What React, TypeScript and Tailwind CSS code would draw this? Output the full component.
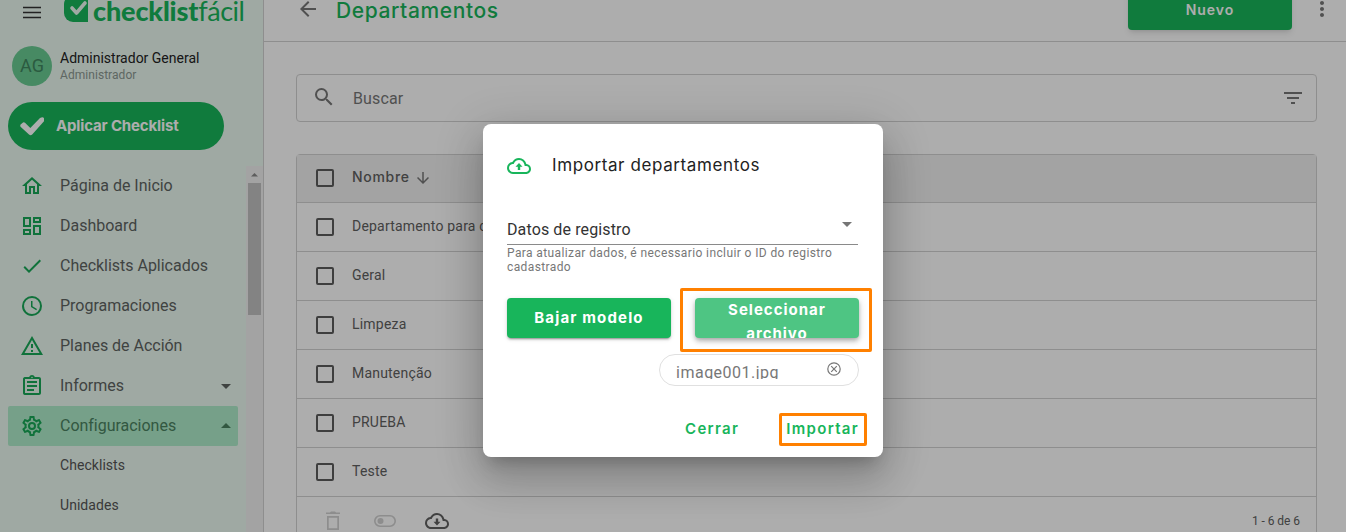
import type { ReactNode } from "react";
import {
  MdArrowBack,
  MdArrowDownward,
  MdArrowDropDown,
  MdArrowDropUp,
  MdFilterList,
  MdMoreVert,
  MdOutlineAssignment,
  MdSearch,
} from "react-icons/md";

const paths = {
  home: "M12 5.69L17 10.19V18H15V12H9V18H7V10.19L12 5.69M12 3L2 12H5V20H11V14H13V20H19V12H22L12 3Z",
  dashboard:
    "M19,5V7H15V5H19M9,5V11H5V5H9M19,13V19H15V13H19M9,17V19H5V17H9M21,3H13V9H21V3M11,3H3V13H11V3M21,11H13V21H21V11M11,15H3V21H11V15Z",
  check: "M21,7L9,19L3.5,13.5L4.91,12.09L9,16.17L19.59,5.59L21,7Z",
  clock:
    "M12,20A8,8 0 0,0 20,12A8,8 0 0,0 12,4A8,8 0 0,0 4,12A8,8 0 0,0 12,20M12,2A10,10 0 0,1 22,12A10,10 0 0,1 12,22C6.47,22 2,17.5 2,12A10,10 0 0,1 12,2M12.5,7V12.25L17,14.92L16.25,16.15L11,13V7H12.5Z",
  alert: "M12,2L1,21H23M12,6L19.53,19H4.47M11,10V14H13V10M11,16V18H13V16",
  cog: "M12,8A4,4 0 0,1 16,12A4,4 0 0,1 12,16A4,4 0 0,1 8,12A4,4 0 0,1 12,8M12,10A2,2 0 0,0 10,12A2,2 0 0,0 12,14A2,2 0 0,0 14,12A2,2 0 0,0 12,10M10,22C9.75,22 9.54,21.82 9.5,21.58L9.13,18.93C8.5,18.68 7.96,18.34 7.44,17.94L4.95,18.95C4.73,19.03 4.46,18.95 4.34,18.73L2.34,15.27C2.21,15.05 2.27,14.78 2.46,14.63L4.57,12.97L4.5,12L4.57,11L2.46,9.37C2.27,9.22 2.21,8.95 2.34,8.73L4.34,5.27C4.46,5.05 4.73,4.96 4.95,5.05L7.44,6.05C7.96,5.66 8.5,5.32 9.13,5.07L9.5,2.42C9.54,2.18 9.75,2 10,2H14C14.25,2 14.46,2.18 14.5,2.42L14.87,5.07C15.5,5.32 16.04,5.66 16.56,6.05L19.05,5.05C19.27,4.96 19.54,5.05 19.66,5.27L21.66,8.73C21.79,8.95 21.73,9.22 21.54,9.37L19.43,11L19.5,12L19.43,13L21.54,14.63C21.73,14.78 21.79,15.05 21.66,15.27L19.66,18.73C19.54,18.95 19.27,19.04 19.05,18.95L16.56,17.95C16.04,18.34 15.5,18.68 14.87,18.93L14.5,21.58C14.46,21.82 14.25,22 14,22H10M11.25,4L10.88,6.61C9.68,6.86 8.62,7.5 7.85,8.39L5.44,7.35L4.69,8.65L6.8,10.2C6.4,11.37 6.4,12.64 6.8,13.8L4.68,15.36L5.43,16.66L7.86,15.62C8.63,16.5 9.68,17.14 10.87,17.38L11.24,20H12.76L13.13,17.39C14.32,17.14 15.37,16.5 16.14,15.62L18.57,16.66L19.32,15.36L17.2,13.81C17.6,12.64 17.6,11.37 17.2,10.2L19.31,8.65L18.56,7.35L16.15,8.39C15.38,7.5 14.32,6.86 13.12,6.62L12.75,4H11.25Z",
  cloud:
    "M19.35 10.04A7.49 7.49 0 0 0 12 4C9.11 4 6.6 5.64 5.35 8.04A5.994 5.994 0 0 0 0 14c0 3.31 2.69 6 6 6h13c2.76 0 5-2.24 5-5 0-2.64-2.05-4.78-4.65-4.96zM19 18H6c-2.21 0-4-1.79-4-4 0-2.05 1.53-3.76 3.56-3.97l1.07-.11.5-.95A5.469 5.469 0 0 1 12 6c2.62 0 4.88 1.86 5.39 4.43l.3 1.5 1.53.11A2.98 2.98 0 0 1 22 15c0 1.65-1.35 3-3 3z",
  trash: "M5 3.5h4l1-1h4l1 1h4v1.6H5zM6 7h12v14H6zM7.7 8.7v10.6h8.6V8.7z",
};

function Icon({ d, className = "size-6" }: { d: string; className?: string }) {
  return (
    <svg viewBox="0 0 24 24" fill="currentColor" fillRule="evenodd" className={className}>
      <path d={d} />
    </svg>
  );
}

const menu: { label: string; icon: ReactNode; arrow?: "up" | "down" }[] = [
  { label: "Página de Inicio", icon: <Icon d={paths.home} /> },
  { label: "Dashboard", icon: <Icon d={paths.dashboard} /> },
  { label: "Checklists Aplicados", icon: <Icon d={paths.check} /> },
  { label: "Programaciones", icon: <Icon d={paths.clock} /> },
  { label: "Planes de Acción", icon: <Icon d={paths.alert} /> },
  { label: "Informes", icon: <MdOutlineAssignment className="size-6" />, arrow: "down" },
  { label: "Configuraciones", icon: <Icon d={paths.cog} />, arrow: "up" },
];

const rows = ["Departamento para c", "Geral", "Limpeza", "Manutenção", "PRUEBA", "Teste"];

function Checkbox() {
  return <span className="size-[18px] shrink-0 rounded-[2px] border-2 border-[#5c5c5c]" />;
}

function Sidebar() {
  return (
    <aside className="flex h-full w-[264px] shrink-0 flex-col border-r border-[#d2d2d2] bg-[#ebf9f1]">
      <div className="flex h-6 items-end pl-5">
        <svg viewBox="0 0 24 24" className="size-6" stroke="#333" strokeWidth="1.4">
          <path d="M3 7.5h18M3 12.5h18M3 17.5h18" />
        </svg>
        <svg viewBox="0 0 24 26" className="mb-0.5 ml-5 h-[26px] w-6 shrink-0">
          <path d="M8 0h16v26H9a9 9 0 0 1-9-9V8a8 8 0 0 1 8-8z" fill="#18b55b" />
          <path d="M8 12l4.5 5L21 7" fill="none" stroke="#ebf9f1" strokeWidth="3.6" strokeLinecap="round" strokeLinejoin="round" />
        </svg>
        <p className="mb-[-2px] ml-[5px] font-['Lato',sans-serif] text-[27px] leading-[30px] whitespace-nowrap text-[#18b55b]">
          <span className="font-black tracking-[-0.15px]">checklist</span>
          <span className="font-normal tracking-[-0.5px]">fácil</span>
        </p>
      </div>

      <div className="mt-[22px] flex h-10 items-center gap-2 pl-3">
        <span className="flex size-10 items-center justify-center rounded-full bg-[#69cc93] text-lg text-[#40865f]">
          AG
        </span>
        <div className="pt-px">
          <p className="text-sm leading-[18px] text-[#222]">Administrador General</p>
          <p className="text-xs leading-[17px] tracking-[0.05px] text-[#8c9891]">Administrador</p>
        </div>
      </div>

      <button className="mt-4 ml-2 flex h-12 w-[216px] shrink-0 items-center gap-3 rounded-full bg-[#18b55b] pl-3 text-white">
        <svg viewBox="0 0 24 24" className="size-6" fill="currentColor">
          <path d="M.6 10.6 3 8.6q1-.7 2 .2L10.3 14 20 4q3-1.8 4 .2v3L12.2 20.4q-1.6 1.6-3.2 0L.8 13q-1-1.2-.2-2.4z" />
        </svg>
        <span className="font-['Inter',sans-serif] text-[15px] font-bold tracking-[-0.15px]">Aplicar Checklist</span>
      </button>

      <div className="mt-4 flex min-h-0 flex-1 overflow-hidden">
        <nav className="flex-1 pl-2">
          {menu.map((item) => (
            <a
              key={item.label}
              className={`flex h-10 w-[230px] items-center rounded-[2px] pl-3 ${
                item.arrow === "up" ? "bg-[#afecca] text-[#4a8261]" : "text-[#5e6461]"
              }`}
            >
              <span className="text-[#18a957]">{item.icon}</span>
              <span className="ml-4 flex-1 text-base tracking-[-0.02px]">{item.label}</span>
              {item.arrow === "down" && <MdArrowDropDown className="size-6" />}
              {item.arrow === "up" && <MdArrowDropUp className="size-6" />}
            </a>
          ))}
          <a className="flex h-10 items-center pb-0.5 pl-[52px] text-sm tracking-[0.05px] text-[#555]">Checklists</a>
          <a className="flex h-10 items-center pb-0.5 pl-[52px] text-sm tracking-[0.05px] text-[#555]">Unidades</a>
        </nav>
        <div className="flex w-[17px] flex-col items-center bg-[#f1f1f1]">
          <svg viewBox="0 0 17 17" className="h-[17px] w-[17px] shrink-0" fill="#8a8a8a">
            <path d="M5 10.5 8.5 7l3.5 3.5z" />
          </svg>
          <span className="h-[132px] w-[13px] bg-[#c1c1c1]" />
        </div>
      </div>
    </aside>
  );
}

function Page() {
  return (
    <main className="flex min-w-0 flex-1 flex-col">
      <header className="flex h-[42px] shrink-0 items-start border-b border-[#d2d2d2] pr-3 pl-8 text-[#777]">
        <MdArrowBack className="mt-[-3px] size-6" />
        <h1 className="mt-[-3px] ml-4 font-['Inter',sans-serif] text-[21px] leading-7 font-medium tracking-[0.6px] text-[#18b55b]">
          Departamentos
        </h1>
        <button className="mt-[-10px] ml-auto flex h-10 w-[164px] items-center justify-center rounded bg-[#18b55b] font-['Inter',sans-serif] text-sm font-semibold tracking-[1px] text-white shadow-md">
          Nuevo
        </button>
        <MdMoreVert className="mt-[-3px] ml-[18px] size-6" />
      </header>

      <div className="flex flex-col gap-8 pt-8 pr-[29px] pl-8">
        <div className="flex h-12 items-center rounded border border-[#d2d2d2] pr-[11px] pl-[15px] text-[#777]">
          <MdSearch className="mt-[-2px] size-6" />
          <span className="mt-0.5 ml-[17px] flex-1 text-base tracking-[0.15px]">Buscar</span>
          <MdFilterList className="mt-[-1px] size-6" />
        </div>

        <div className="flex flex-col rounded-t border border-[#d2d2d2] text-[#606060]">
          <div className="flex h-12 items-center border-b border-[#d2d2d2] bg-[#f0f0f0] pb-px pl-[19px]">
            <Checkbox />
            <span className="mt-[-2px] ml-[18px] font-['Inter',sans-serif] text-sm font-medium tracking-[0.7px]">Nombre</span>
            <MdArrowDownward className="ml-1 size-[18px] text-[#777]" />
          </div>
          {rows.map((row) => (
            <div key={row} className="flex h-[49px] items-center border-b border-[#d2d2d2] pl-[19px]">
              <Checkbox />
              <span className="mt-[-2px] ml-[18px] text-sm tracking-[0.2px]">{row}</span>
            </div>
          ))}
          <div className="flex h-12 items-center pl-6">
            <Icon d={paths.trash} className="size-6 text-[#d0d0d0]" />
            <svg viewBox="0 0 24 24" className="ml-7 size-6" fill="none" stroke="#d0d0d0" strokeWidth="1.6">
              <rect x="1.8" y="6.8" width="20.4" height="10.4" rx="5.2" />
              <circle cx="7.5" cy="12" r="3" fill="#d0d0d0" stroke="none" />
            </svg>
            <Icon d={paths.cloud + "M10.8 9.5h2.4v3.3h2.3L12 16.4l-3.5-3.6h2.3z"} className="ml-7 size-6" />
            <span className="mr-4 ml-auto text-xs tracking-[-0.05px]">1 - 6 de 6</span>
          </div>
        </div>
      </div>
    </main>
  );
}

function ImportDialog() {
  return (
    <section className="absolute top-[124px] left-[483px] flex h-[333px] w-[400px] flex-col rounded-lg bg-white px-6 shadow-[0_11px_15px_-7px_rgba(0,0,0,0.2),0_24px_38px_3px_rgba(0,0,0,0.14),0_9px_46px_8px_rgba(0,0,0,0.12)]">
      <div className="mt-7 flex h-6 items-center gap-[21px]">
        <Icon d={paths.cloud + "M10.8 16v-3.3H8.5L12 9.1l3.5 3.6h-2.3V16z"} className="mt-1 size-6 text-[#18b55b]" />
        <h2 className="mt-0.5 font-['Inter',sans-serif] text-[17px] leading-6 tracking-[0.6px] text-[#222]">Importar departamentos</h2>
      </div>

      <div className="mt-[42px] flex h-[27px] w-[351px] items-start border-b border-[#8a8a8a]">
        <span className="flex-1 text-base leading-6 tracking-[0.12px] text-[#333]">Datos de registro</span>
        <MdArrowDropDown className="mt-[-6px] -mr-px size-6 text-[#757575]" />
      </div>
      <p className="mt-px w-[351px] text-xs leading-[14px] tracking-[0.39px] text-[#777]">
        Para atualizar dados, é necessario incluir o ID do registro cadastrado
      </p>

      <div className="mt-6 flex gap-6 font-['Inter',sans-serif] text-[15px] font-bold text-white">
        <button className="h-10 w-[164px] rounded bg-[#18b55b] tracking-[1.15px] shadow-[0_3px_1px_-2px_rgba(0,0,0,0.2),0_2px_2px_rgba(0,0,0,0.14),0_1px_5px_rgba(0,0,0,0.12)]">
          Bajar modelo
        </button>
        <button className="flex h-10 w-[164px] items-start justify-center overflow-hidden rounded bg-[#4ec583] px-4 leading-6 tracking-[1px] shadow-[0_2px_4px_-1px_rgba(0,0,0,0.2),0_4px_5px_rgba(0,0,0,0.14),0_1px_10px_rgba(0,0,0,0.12)]">
          Seleccionar archivo
        </button>
      </div>

      <div className="mt-4 flex h-8 w-[200px] items-center self-end rounded-full border border-[#e0e0e0] px-4 text-[#777]">
        <span className="mt-[3px] h-[15px] flex-1 overflow-hidden text-base leading-[17px] tracking-[0.5px]">image001.jpg</span>
        <svg viewBox="0 0 16 16" className="mb-0.5 size-4" fill="none" stroke="currentColor" strokeWidth="1.2">
          <circle cx="8" cy="8" r="6.2" />
          <path d="M5.2 5.2l5.6 5.6M10.8 5.2l-5.6 5.6" />
        </svg>
      </div>

      <div className="mt-[31px] flex h-6 items-center justify-end gap-[47px] font-['Inter',sans-serif] text-[15px] font-semibold tracking-[1.3px] text-[#18b55b]">
        <button>Cerrar</button>
        <button>Importar</button>
      </div>

      <span className="absolute top-[164px] left-[197px] h-16 w-48 rounded-[2px] border-3 border-[#ff8000]" />
      <span className="absolute top-[289px] left-[296px] h-[33px] w-[88px] rounded-[2px] border-3 border-[#ff8000]" />
    </section>
  );
}

function App() {
  return (
    <div className="relative flex h-screen w-screen overflow-hidden bg-white font-['Roboto',sans-serif]">
      <Sidebar />
      <Page />
      <div className="absolute inset-0 bg-black/32" />
      <ImportDialog />
    </div>
  );
}

export default App;
